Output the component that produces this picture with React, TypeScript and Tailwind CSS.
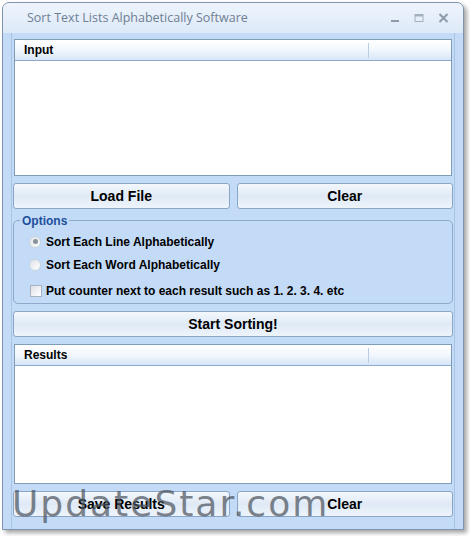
import React from 'react';

const ui = { fontFamily: '"Liberation Sans", Arial, sans-serif' };

function Panel({ title, h }: { title: string; h: string }) {
  return (
    <div className={`mx-px flex flex-col border border-[#7f9db9] bg-white ${h}`}>
      <div className="flex h-[21px] items-center border-b border-[#8ea9c9] bg-gradient-to-b from-white via-[#f2f7fd] to-[#d6e6f8]">
        <div className="flex-1 pl-[9px] text-[12px] font-bold text-black">{title}</div>
        <div className="h-[15px] w-px bg-[#b9cde4]" />
        <div className="w-[82px]" />
      </div>
      <div className="flex-1" />
    </div>
  );
}

function Btn({ label, className = '' }: { label: string; className?: string }) {
  return (
    <button
      className={`flex h-[26px] items-center justify-center rounded-[3px] border border-[#8aa6c6] bg-gradient-to-b from-[#f4f8fd] via-[#dfe9f5] to-[#eef4fb] text-[14px] font-bold text-black ${className}`}
    >
      {label}
    </button>
  );
}

function Radio({ checked, label }: { checked?: boolean; label: string }) {
  return (
    <div className="flex h-[23px] items-center gap-[5px] pl-[15px] text-[12px] font-bold text-black">
      <span className="flex h-[12px] w-[12px] items-center justify-center rounded-full border border-[#c9d3de] bg-gradient-to-br from-[#dfe3e8] to-white">
        {checked && <span className="h-[5px] w-[5px] rounded-full bg-[#8a929c]" />}
      </span>
      {label}
    </div>
  );
}

export default function App() {
  return (
    <div className="relative h-[536px] w-[470px] bg-white" style={ui}>
      <div className="ml-[2px] pt-[2px]">
        <div className="flex h-[528px] w-[462px] flex-col rounded-t-[7px] border border-[#8193ab] bg-[#c3dbf7] shadow-[3px_3px_4px_rgba(0,0,0,0.35)]">
          {/* title bar */}
          <div className="flex h-[30px] items-center rounded-t-[6px] bg-gradient-to-b from-[#eef4fc] to-[#dde9f8] pl-[24px] pr-[14px]">
            <div className="flex-1 text-[12.5px] text-[#6e7f93]" style={{ fontFamily: '"Open Sans", "Liberation Sans", sans-serif' }}>
              Sort Text Lists Alphabetically Software
            </div>
            <div className="flex items-center gap-[14px]">
              <svg width="10" height="10" viewBox="0 0 10 10"><rect x="1" y="7" width="8" height="2" fill="#8e9aaa" /></svg>
              <svg width="10" height="10" viewBox="0 0 10 10"><rect x="1" y="1.5" width="8" height="7" fill="none" stroke="#a4afbd" /><rect x="1" y="1.5" width="8" height="2" fill="#a4afbd" /></svg>
              <svg width="11" height="10" viewBox="0 0 11 10"><path d="M1.5 1 L9.5 9 M9.5 1 L1.5 9" stroke="#8e9aaa" strokeWidth="2" /></svg>
            </div>
          </div>
          {/* body */}
          <div className="mx-[8px] flex flex-1 flex-col border-x border-[#a9c3e2] px-[1px] pt-[6px]">
            <Panel title="Input" h="h-[137px]" />
            <div className="mt-[7px] flex gap-[7px]">
              <Btn label="Load File" className="flex-1" />
              <Btn label="Clear" className="flex-1" />
            </div>
            <div className="relative mt-[11px] h-[84px] rounded-[5px] border border-[#8ea9c9] pt-[9px]">
              <div className="absolute -top-[9px] left-[6px] bg-[#c3dbf7] px-[2px] text-[12px] font-bold text-[#1e4f9c]">Options</div>
              <Radio checked label="Sort Each Line Alphabetically" />
              <Radio label="Sort Each Word Alphabetically" />
              <div className="mt-[3px] flex h-[23px] items-center gap-[4px] pl-[16px] text-[12px] font-bold text-black">
                <span className="h-[12px] w-[12px] border border-[#a7b3c1] bg-gradient-to-br from-[#dde2e8] to-white" />
                Put counter next to each result such as 1. 2. 3. 4. etc
              </div>
            </div>
            <Btn label="Start Sorting!" className="mt-[7px]" />
            <div className="mt-[7px]">
              <Panel title="Results" h="h-[140px]" />
            </div>
            <div className="mt-[7px] flex gap-[7px]">
              <Btn label="Save Results" className="flex-1" />
              <Btn label="Clear" className="flex-1" />
            </div>
          </div>
        </div>
      </div>
      {/* watermark */}
      <div
        className="pointer-events-none absolute left-[12px] top-[486px] text-[36px] leading-none tracking-[2px] text-[#4a525c] opacity-70"
        style={{ fontFamily: '"DejaVu Sans", Verdana, sans-serif' }}
      >
        UpdateStar.com
      </div>
    </div>
  );
}
